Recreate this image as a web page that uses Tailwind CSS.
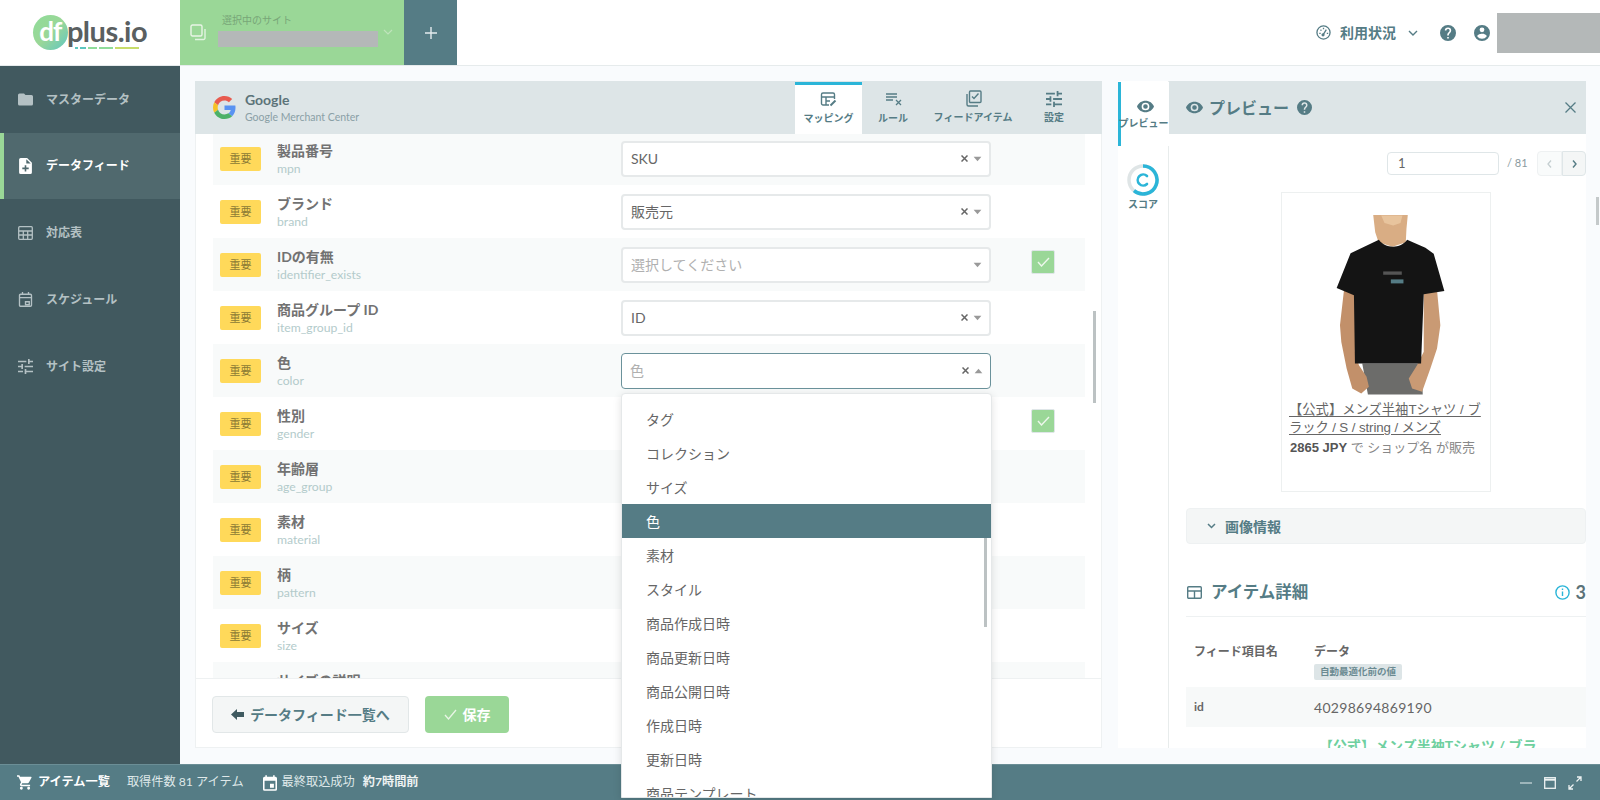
<!DOCTYPE html>
<html lang="ja">
<head>
  <meta charset="UTF-8" />
  <title>dfplus.io</title>
  <script src="https://cdn.jsdelivr.net/npm/@tailwindcss/browser@4"></script>
</head>
<body class="h-screen w-screen overflow-hidden flex flex-col bg-[#f9fbfd] text-[#666] [font-family:Lato,'Noto_Sans_CJK_JP',sans-serif]">

  <!-- header -->
  <header class="h-[66px] shrink-0 flex bg-white border-b border-[#e6ebec]">
    <div class="w-[180px] flex items-center justify-center">
      <div class="relative flex items-center">
        <div class="w-[35px] h-[35px] rounded-full bg-gradient-to-br from-[#8fdc9a] via-[#9ad797] to-[#5cc6c0] flex items-center justify-center">
          <span class="text-white font-bold text-[26px] leading-none tracking-[-1px] -mt-1">df</span>
        </div>
        <span class="-ml-[1px] text-[#5a5f61] font-bold text-[29px] leading-none tracking-[-0.5px] -mt-1">plus.io</span>
        <div class="absolute left-[42px] bottom-[1px] flex gap-[2px] h-[2px]">
          <i class="w-[3px] bg-[#5cc6c0]"></i><i class="w-[6px] bg-[#5cc6c0]"></i><i class="w-[9px] bg-[#8fdc9a]"></i><i class="w-[14px] bg-[#8fdc9a]"></i><i class="w-[24px] bg-[#c8dc6a]"></i>
        </div>
      </div>
    </div>
    <div class="w-[224px] bg-[#9ad797] flex items-center pl-[10px]">
      <svg class="w-[17px] h-[17px] shrink-0" viewBox="0 0 17 17" fill="none" stroke="#fff"><rect x="1" y="1" width="11" height="11" rx="1.5" stroke="#e9f5e6" stroke-width="1.4"/><path d="M15 5v9a1.5 1.5 0 0 1-1.5 1.5H5" stroke-width="1.4" opacity=".7"/></svg>
      <div class="ml-[11px] w-[160px] -mt-[4px]">
        <div class="text-[10px] leading-[12px] text-[#78a678] ml-[4px] mb-[5px]">選択中のサイト</div>
        <div class="h-[16px] bg-[#b4b8b8]"></div>
      </div>
      <svg class="w-[10px] h-[6px] ml-[5px] -mt-[2px]" viewBox="0 0 10 6" fill="none" stroke="#bfe3bb" stroke-width="1.2"><path d="M1 1l4 4 4-4"/></svg>
    </div>
    <div class="w-[53px] bg-[#557c85] flex items-center justify-center">
      <svg class="w-[12px] h-[12px]" viewBox="0 0 12 12" stroke="#e4ecee" stroke-width="1.4"><path d="M6 0v12M0 6h12"/></svg>
    </div>
    <div class="flex-1 flex items-center justify-end">
      <svg class="w-[15px] h-[15px] text-[#557c85]" viewBox="0 0 16 16" fill="none" stroke="currentColor" stroke-width="1.4"><circle cx="8" cy="8" r="7"/><path d="M7.5 10.500L11 5M3.500 9h1.500M11.500 9H13M8 3v1.500M4.800 5l1 1"/><circle cx="7.500" cy="10.500" r="1" fill="currentColor"/></svg>
      <span class="ml-[9px] text-[14px] font-bold text-[#557c85] leading-none">利用状況</span>
      <svg class="ml-[12px] w-[10px] h-[6px]" viewBox="0 0 10 6" fill="none" stroke="#557c85" stroke-width="1.4"><path d="M1 1l4 4 4-4"/></svg>
      <svg class="ml-[22px] w-[16px] h-[16px] text-[#557c85]" viewBox="2 2 20 20" fill="currentColor"><path d="M12 2a10 10 0 1 0 0 20 10 10 0 0 0 0-20zm1 17h-2v-2h2zm2.07-7.75-.9.92C13.45 12.9 13 13.5 13 15h-2v-.5c0-1.1.45-2.1 1.17-2.83l1.24-1.26A2 2 0 1 0 10 9H8a4 4 0 1 1 8 0c0 .88-.36 1.68-.93 2.25z"/></svg>
      <svg class="ml-[18px] w-[16px] h-[16px] text-[#557c85]" viewBox="2 2 20 20" fill="currentColor"><path d="M12 2a10 10 0 1 0 0 20 10 10 0 0 0 0-20zm0 3a3 3 0 1 1 0 6 3 3 0 0 1 0-6zm0 14.2a7.2 7.2 0 0 1-6-3.22c.03-1.99 4-3.08 6-3.08s5.97 1.09 6 3.08a7.2 7.2 0 0 1-6 3.22z"/></svg>
      <div class="ml-[7px] w-[103px] h-[40px] bg-[#b4b8b8]"></div>
    </div>
  </header>

  <div class="flex-1 flex min-h-0">
    <!-- sidebar -->
    <nav class="w-[180px] shrink-0 bg-[#41595f] text-[#b4c1c4] text-[12px] font-bold">
      <a class="h-[67px] flex items-center pl-[18px] gap-[13px]">
        <svg class="w-[15px] h-[15px]" viewBox="2 3 20 18" fill="currentColor"><path d="M10 4H4a2 2 0 0 0-2 2v12a2 2 0 0 0 2 2h16a2 2 0 0 0 2-2V8a2 2 0 0 0-2-2h-8z"/></svg>
        マスターデータ
      </a>
      <a class="h-[66px] flex items-center pl-[14px] gap-[13px] border-l-4 border-[#9ad797] bg-[#50696e] text-white">
        <svg class="w-[15px] h-[16px]" viewBox="4 2 16 20" fill="currentColor"><path d="M14 2H6a2 2 0 0 0-2 2v16a2 2 0 0 0 2 2h12a2 2 0 0 0 2-2V8zm2 14h-3v3h-2v-3H8v-2h3v-3h2v3h3zm-3-7V3.5L18.5 9z"/></svg>
        データフィード
      </a>
      <a class="h-[67px] flex items-center pl-[18px] gap-[13px]">
        <svg class="w-[15px] h-[14px]" viewBox="0 0 15 14" fill="none" stroke="currentColor" stroke-width="1.3"><rect x=".7" y=".7" width="13.6" height="12.6" rx="1"/><path d="M.7 5h13.6M.7 9h13.6M5.3 5v8.3M9.7 5v8.3"/></svg>
        対応表
      </a>
      <a class="h-[67px] flex items-center pl-[18px] gap-[13px]">
        <svg class="w-[15px] h-[15px]" viewBox="3 2 18 20" fill="none" stroke="currentColor" stroke-width="1.8"><rect x="4" y="5" width="16" height="16" rx="1.5"/><path d="M4 9.500h16M8 2v4M16 2v4M12 15h5v4h-5z"/></svg>
        スケジュール
      </a>
      <a class="h-[67px] flex items-center pl-[18px] gap-[13px]">
        <svg class="w-[15px] h-[15px]" viewBox="3 3 18 18" fill="currentColor"><path d="M3 17v2h6v-2zM3 5v2h10V5zm10 16v-2h8v-2h-8v-2h-2v6zM7 9v2H3v2h4v2h2V9zm14 4v-2H11v2zm-6-4h2V7h4V5h-4V3h-2z"/></svg>
        サイト設定
      </a>
    </nav>

    <!-- main -->
    <main class="flex-1 flex pt-[15px] pb-[16px] pl-[15px] pr-[14px] gap-[16px] min-w-0">
      <!-- mapping card -->
      <section class="relative w-[907px] shrink-0 flex flex-col bg-white border border-[#eef1f2] border-t-0">
        <div class="relative z-10 h-[53px] shrink-0 flex bg-[#dde5e7] -mx-px pr-[16px]">
          <div class="flex items-center pl-[18px] flex-1">
            <svg class="w-[23px] h-[23px] opacity-85" viewBox="0 0 48 48"><path fill="#EA4335" d="M24 9.500c3.540 0 6.710 1.220 9.210 3.600l6.850-6.850C35.900 2.380 30.470 0 24 0 14.620 0 6.510 5.380 2.560 13.220l7.980 6.190C12.430 13.720 17.740 9.500 24 9.500z"/><path fill="#4285F4" d="M46.980 24.550c0-1.570-.15-3.090-.38-4.550H24v9.020h12.940c-.58 2.960-2.260 5.480-4.780 7.180l7.730 6c4.510-4.180 7.090-10.360 7.090-17.650z"/><path fill="#FBBC05" d="M10.530 28.590c-.48-1.450-.76-2.990-.76-4.590s.27-3.140.76-4.590l-7.980-6.190C.92 16.460 0 20.120 0 24c0 3.880.92 7.540 2.560 10.780l7.970-6.190z"/><path fill="#34A853" d="M24 48c6.480 0 11.930-2.130 15.890-5.810l-7.730-6c-2.150 1.450-4.920 2.300-8.160 2.300-6.260 0-11.570-4.220-13.470-9.910l-7.980 6.190C6.510 42.620 14.620 48 24 48z"/></svg>
            <div class="ml-[9px]">
              <div class="text-[14px] leading-[18px] font-bold text-[#5c7379]">Google</div>
              <div class="text-[10.500px] leading-[16px] text-[#8aa0a6]">Google Merchant Center</div>
            </div>
          </div>
          <div class="w-[67px] mt-px bg-white border-t-[3px] border-[#2bb5d8] flex flex-col items-center pt-[6px] text-[10px] font-bold text-[#557c85]">
            <svg class="w-[17px] h-[17px]" viewBox="0 0 17 17" fill="none" stroke="currentColor" stroke-width="1.4"><path d="M9 14H3a1.500 1.500 0 0 1-1.500-1.500v-9A1.500 1.500 0 0 1 3 2h10a1.500 1.500 0 0 1 1.500 1.500V8M1.500 6h13M6 6v8M6 10h4"/><path d="M10.500 14.500l5-5" stroke-width="2"/></svg>
            <span class="mt-[3px] leading-[14px]">マッピング</span>
          </div>
          <div class="w-[62px] flex flex-col items-center pt-[10px] text-[10px] font-bold text-[#557c85]">
            <svg class="w-[17px] h-[17px]" viewBox="0 0 17 17" fill="none" stroke="currentColor" stroke-width="1.3"><path d="M1 3h11M1 6h11M1 9h7M11 9l5 5M16 9l-5 5"/></svg>
            <span class="mt-[3px] leading-[14px]">ルール</span>
          </div>
          <div class="w-[98px] flex flex-col items-center pt-[9px] text-[10px] font-bold text-[#557c85]">
            <svg class="w-[17px] h-[17px]" viewBox="0 0 17 17" fill="none" stroke="currentColor" stroke-width="1.4"><rect x="4.500" y="1" width="11.500" height="11.500" rx="1"/><path d="M7 6.500l2 2 4.500-5M2 4v10.500A1.500 1.500 0 0 0 3.500 16H13"/></svg>
            <span class="mt-[3px] leading-[14px]">フィードアイテム</span>
          </div>
          <div class="w-[64px] flex flex-col items-center pt-[10px] text-[10px] font-bold text-[#557c85]">
            <svg class="w-[16px] h-[16px]" viewBox="3 3 18 18" fill="currentColor"><path d="M3 17v2h6v-2zM3 5v2h10V5zm10 16v-2h8v-2h-8v-2h-2v6zM7 9v2H3v2h4v2h2V9zm14 4v-2H11v2zm-6-4h2V7h4V5h-4V3h-2z"/></svg>
            <span class="mt-[3px] leading-[14px]">設定</span>
          </div>
        </div>

        <div class="relative flex-1 min-h-0 overflow-hidden pl-[17px] pr-[16px]">
          <div id="rows" class="-mt-[2px]"></div>
          <div class="absolute right-[5px] top-[177px] w-[3px] h-[92px] bg-[#bcc2c3]"></div>
        </div>

        <div class="h-[69px] shrink-0 flex items-center gap-[16px] pl-[16px] pt-[2px] border-t border-[#eef1f2] bg-white">
          <button class="w-[197px] h-[37px] flex items-center justify-center gap-[6px] rounded-[4px] border border-[#e2e7e8] bg-[#f4f6f6] text-[14px] font-bold text-[#557c85]">
            <svg class="w-[13px] h-[11px]" viewBox="0 0 13 11" fill="#3f5a60"><path d="M6 0v3h7v5H6v3L0 5.500z"/></svg>
            データフィード一覧へ
          </button>
          <button class="w-[84px] h-[37px] flex items-center justify-center gap-[6px] rounded-[4px] bg-[#9ad797] text-[14px] font-bold text-white">
            <svg class="w-[13px] h-[11px]" viewBox="0 0 13 11" fill="none" stroke="#e9f5e6" stroke-width="1.3"><path d="M1 6l3.500 4L12 1"/></svg>
            保存
          </button>
        </div>

        <!-- open dropdown -->
        <div class="absolute z-50 left-[425px] top-[312px] w-[371px] h-[405px] overflow-hidden bg-white rounded-t-[4px] border border-[#e5e8e9] shadow-[0_2px_8px_rgba(0,0,0,0.12)] pt-[8px] text-[14px] text-[#666]">
          <div id="options"></div>
          <div class="absolute right-[4px] top-[144px] w-[3px] h-[89px] bg-[#bcc2c3]"></div>
        </div>
      </section>

      <!-- preview -->
      <section class="flex-1 flex min-w-0 bg-white">
        <div class="w-[51px] shrink-0 border-r border-[#e8ecec] text-[10px] font-bold text-[#557c85]">
          <div class="h-[64px] mt-px border-l-[3px] border-[#2bb5d8] bg-white flex flex-col items-center pt-[18px] -mr-px">
            <svg class="w-[17px] h-[13px]" viewBox="1 4.500 22 15" fill="currentColor"><path d="M12 4.500C7 4.500 2.700 7.600 1 12c1.700 4.400 6 7.500 11 7.500s9.300-3.100 11-7.500c-1.700-4.400-6-7.500-11-7.500zM12 17a5 5 0 1 1 0-10 5 5 0 0 1 0 10zm0-8a3 3 0 1 0 0 6 3 3 0 0 0 0-6z"/></svg>
            <span class="mt-[3px] leading-[14px] whitespace-nowrap -ml-[3px]">プレビュー</span>
          </div>
          <div class="flex flex-col items-center mt-[18px]">
            <svg class="w-[32px] h-[32px]" viewBox="0 0 32 32" fill="none"><circle cx="16" cy="16" r="14" stroke="#dfe5e6" stroke-width="3.500"/><path d="M16 2a14 14 0 1 1-9 24.700" stroke="#2bb5d8" stroke-width="3.500"/><path d="M20 12a5.500 5.500 0 1 0 0 8" stroke="#2bb5d8" stroke-width="2.600" stroke-linecap="round"/></svg>
            <span class="mt-[1px] leading-[14px]">スコア</span>
          </div>
        </div>

        <div class="relative flex-1 min-w-0 flex flex-col">
          <div class="h-[53px] shrink-0 flex items-center bg-[#dde5e7] pl-[17px] pr-[10px]">
            <svg class="w-[17px] h-[13px] text-[#557c85]" viewBox="1 4.500 22 15" fill="currentColor"><path d="M12 4.500C7 4.500 2.700 7.600 1 12c1.700 4.400 6 7.500 11 7.500s9.300-3.100 11-7.500c-1.700-4.400-6-7.500-11-7.500zM12 17a5 5 0 1 1 0-10 5 5 0 0 1 0 10zm0-8a3 3 0 1 0 0 6 3 3 0 0 0 0-6z"/></svg>
            <span class="ml-[6px] text-[16px] font-bold text-[#557c85] leading-none">プレビュー</span>
            <svg class="ml-[8px] w-[15px] h-[15px] text-[#557c85]" viewBox="2 2 20 20" fill="currentColor"><path d="M12 2a10 10 0 1 0 0 20 10 10 0 0 0 0-20zm1 17h-2v-2h2zm2.070-7.750-.9.920C13.450 12.900 13 13.500 13 15h-2v-.5c0-1.100.45-2.100 1.170-2.830l1.240-1.260A2 2 0 1 0 10 9H8a4 4 0 1 1 8 0c0 .88-.36 1.680-.93 2.250z"/></svg>
            <svg class="ml-auto w-[11px] h-[11px]" viewBox="0 0 11 11" stroke="#557c85" stroke-width="1.300"><path d="M.5.5l10 10M10.500.5l-10 10"/></svg>
          </div>

          <div class="flex-1 min-h-0 overflow-hidden pl-[17px]">
            <div class="mt-[17px] flex items-center justify-end h-[25px]">
              <div class="w-[112px] h-[23px] border border-[#dfe6e8] rounded-[4px] pl-[10px] text-[13px] leading-[21px]">1</div>
              <span class="ml-[8px] w-[30px] text-[11px] text-[#8a9a9e]">/ 81</span>
              <div class="w-[25px] h-[25px] border border-[#eef1f2] bg-[#f9fbfb] rounded-l-[4px] flex items-center justify-center">
                <svg class="w-[5px] h-[8px]" viewBox="0 0 5 8" fill="none" stroke="#c4ced0" stroke-width="1.300"><path d="M4 .5L1 4l3 3.500"/></svg>
              </div>
              <div class="w-[24px] h-[25px] border border-[#dfe6e8] bg-[#f4f6f6] rounded-r-[4px] flex items-center justify-center">
                <svg class="w-[5px] h-[8px]" viewBox="0 0 5 8" fill="none" stroke="#557c85" stroke-width="1.400"><path d="M1 .5L4 4 1 7.500"/></svg>
              </div>
            </div>

            <!-- product card -->
            <div class="mt-[16px] ml-[95px] w-[210px] h-[300px] border border-[#edf0f0] flex flex-col px-[10px]">
              <svg class="w-[113px] h-[184px] mt-[19px] ml-[42px] shrink-0" viewBox="270 60 340 552">
                <path d="M388 68h104l-4 42-2 40-40 14-42-14-10-30z" fill="#d9ad84"/>
                <path d="M412 70h64l-6 22-22 8-26-8z" fill="#e8c49d"/>
                <path d="M355 515h178l4 93H372z" fill="#6c6c6a"/>
                <path d="M300 295L288 400l4 50 16 80 17 60 27 15 23-20-7-30-23-35-12-40 2-180z" fill="#c2906a"/>
                <path d="M580 295l10 105-10 70-20 60-25 70-30-10-10-30 25-40 20-40V300z" fill="#c99a74"/>
                <path d="M405 143c20 28 65 28 85 0l55 24 25 18 32 112-62 10-8 208H333l-3-205-52-22 42-105z" fill="#141414"/>
                <rect x="418" y="238" width="56" height="10" fill="#555"/>
                <rect x="441" y="262" width="38" height="12" fill="#557c85"/>
              </svg>
              <a class="mt-[5px] -ml-[3px] -mr-[6px] text-[13.300px] leading-[18px] whitespace-nowrap text-[#666] underline underline-offset-2 [font-family:'Liberation_Sans','Noto_Sans_CJK_JP',sans-serif]">【公式】メンズ半袖Tシャツ / ブ<br><span class="tracking-[-0.1px]">ラック / S / string / メンズ</span></a>
              <p class="mt-[2px] -ml-[2px] text-[13px] leading-[17px] whitespace-nowrap text-[#888] [font-family:'Liberation_Sans','Noto_Sans_CJK_JP',sans-serif]"><b class="text-[#555]">2865 JPY</b> で ショップ名 が販売</p>
            </div>

            <div class="mt-[16px] h-[36px] flex items-center rounded-[4px] border border-[#eef1f2] bg-[#f4f6f6] pl-[20px] text-[14px] font-bold text-[#557c85]">
              <svg class="w-[9px] h-[6px]" viewBox="0 0 9 6" fill="none" stroke="#557c85" stroke-width="1.500"><path d="M1 1l3.500 3.500L8 1"/></svg>
              <span class="ml-[9px]">画像情報</span>
            </div>

            <div class="mt-[36px] h-[37px] flex items-start border-b border-[#eef1f2] text-[#557c85]">
              <svg class="w-[15px] h-[13px] mt-[6px] ml-px" viewBox="0 0 15 13" fill="none" stroke="currentColor" stroke-width="1.400"><rect x=".7" y=".7" width="13.600" height="11.600" rx="1"/><path d="M.7 5h13.600M7.500 5v7.300"/></svg>
              <span class="ml-[9px] text-[16.500px] font-bold leading-[25px]">アイテム詳細</span>
              <svg class="ml-auto w-[15px] h-[15px] mt-[5px]" viewBox="0 0 15 15" fill="none" stroke="#2bb5d8" stroke-width="1.400"><circle cx="7.500" cy="7.500" r="6.600"/><path d="M7.500 6.500v4.500M7.500 3.500v1.500"/></svg>
              <span class="ml-[6px] text-[18px] font-bold leading-[24px] text-[#5c7379]">3</span>
            </div>

            <div class="flex pt-[26px] h-[70px]">
              <div class="w-[128px] pl-[8px] text-[12px] font-bold leading-[18px]">フィード項目名</div>
              <div>
                <div class="text-[12px] font-bold leading-[18px]">データ</div>
                <div class="mt-[3px] w-[88px] h-[16px] rounded-[2px] bg-[#dde5e7] text-center text-[9.500px] font-bold leading-[16px] text-[#6b8b92]">自動最適化前の値</div>
              </div>
            </div>
            <div class="flex items-center h-[40px] bg-[#f7f9f9]">
              <div class="w-[128px] pl-[8px] text-[12px] font-bold">id</div>
              <div class="text-[14px] tracking-[0.3px]">40298694869190</div>
            </div>
            <div class="pl-[133px] pt-[9px] text-[14px] leading-[20px] font-bold text-[#6fd0a0] whitespace-nowrap">【公式】メンズ半袖Tシャツ / ブラ</div>
          </div>
          <div class="absolute right-[-13px] top-[116px] w-[3px] h-[28px] bg-[#c4c9ca]"></div>
        </div>
      </section>
    </main>
  </div>

  <!-- bottom bar -->
  <footer class="h-[36px] shrink-0 flex items-center bg-[#557c85] text-white text-[12.200px] pl-[17px] pr-[18px] border-t border-[#6b8e96]">
    <svg class="w-[16px] h-[15px]" viewBox="1 2 22 20" fill="currentColor"><path d="M7 18a2 2 0 1 0 0 4 2 2 0 0 0 0-4zM1 2v2h2l3.600 7.590-1.350 2.450A2 2 0 0 0 7 17h12v-2H7.420a.25.25 0 0 1-.25-.25l.03-.12.9-1.630h7.450c.75 0 1.410-.41 1.750-1.030l3.580-6.490A1 1 0 0 0 20 4H5.210l-.94-2zm16 16a2 2 0 1 0 0 4 2 2 0 0 0 0-4z"/></svg>
    <span class="ml-[5px] font-bold">アイテム一覧</span>
    <span class="ml-[17px] text-[#dfe8e9]">取得件数 81 アイテム</span>
    <svg class="ml-[19px] w-[14px] h-[16px]" viewBox="3 2 18 20" fill="currentColor"><path d="M19 4h-1V2h-2v2H8V2H6v2H5a2 2 0 0 0-2 2v14a2 2 0 0 0 2 2h14a2 2 0 0 0 2-2V6a2 2 0 0 0-2-2zm0 16H5V9h14zm-2-7h-5v5h5z"/></svg>
    <span class="ml-[5px] text-[#dfe8e9]">最終取込成功</span>
    <span class="ml-[8px] font-bold text-[#eef3f3]">約7時間前</span>
    <svg class="ml-auto w-[12px] h-[2px]" viewBox="0 0 12 2" fill="#9db5ba"><rect width="12" height="2"/></svg>
    <svg class="ml-[12px] w-[12px] h-[12px]" viewBox="0 0 12 12" fill="none" stroke="#eef3f3" stroke-width="1.300"><rect x=".7" y=".7" width="10.600" height="10.600"/><path d="M.7 2.700h10.600" stroke-width="2"/></svg>
    <svg class="ml-[12px] w-[14px] h-[14px]" viewBox="0 0 14 14" fill="none" stroke="#eef3f3" stroke-width="1.300"><path d="M8.500 5.500L13 1M9 1h4v4M5.500 8.500L1 13M1 9v4h4"/></svg>
  </footer>

  <script>
    // mapping rows: label, feed name, select value, and flags
    const rows = [
      { label: '製品番号', name: 'mpn', value: 'SKU' },
      { label: 'ブランド', name: 'brand', value: '販売元' },
      { label: 'IDの有無', name: 'identifier_exists', hint: '選択してください', checked: true },
      { label: '商品グループ ID', name: 'item_group_id', value: 'ID' },
      { label: '色', name: 'color', hint: '色', clear: true, open: true },
      { label: '性別', name: 'gender', checked: true },
      { label: '年齢層', name: 'age_group' },
      { label: '素材', name: 'material' },
      { label: '柄', name: 'pattern' },
      { label: 'サイズ', name: 'size' },
      { label: 'サイズの説明', name: 'size_type', noBadge: true },
    ];
    const options = ['タグ', 'コレクション', 'サイズ', '色', '素材', 'スタイル', '商品作成日時', '商品更新日時', '商品公開日時', '作成日時', '更新日時', '商品テンプレート'];

    document.getElementById('rows').innerHTML = rows.map((r, i) => {
      const shade = i % 2 === 0 ? 'bg-[#f8fafa]' : 'bg-white';
      const box = r.open ? 'border-[1.500px] border-[#6b929b]' : 'border-2 border-[#e6e9ea]';
      const text = r.value ? 'text-[#666]' : 'text-[#b0b0b0]';
      const caret = r.open ? '<path d="M0 6l4.500-5L9 6z"/>' : '<path d="M0 1l4.500 5L9 1z"/>';
      const clear = r.value || r.clear ? '<svg class="w-[7px] h-[7px] mr-[5px]" viewBox="0 0 7 7" stroke="#666" stroke-width="1.500"><path d="M.5.5l6 6M6.500.5l-6 6"/></svg>' : '';
      const badge = r.noBadge ? '' : '<div class="w-[41px] h-[24px] rounded-[2px] bg-[#ffd95a] text-center text-[11px] leading-[24px] text-[#8b7a35]">重要</div>';
      const check = r.checked
        ? '<div class="ml-[40px] -mt-[5px] w-[24px] h-[24px] rounded-[2px] bg-[#9ad797] border border-[#dfe6e8] flex items-center justify-center"><svg class="w-[13px] h-[10px]" viewBox="0 0 13 10" fill="none" stroke="#eef7ec" stroke-width="1.400"><path d="M1 5l3.500 4L12 1"/></svg></div>'
        : '';
      return `<div class="h-[53px] flex items-center ${shade}">
        <div class="w-[64px] pl-[7px] shrink-0">${badge}</div>
        <div class="w-[344px] shrink-0 pt-[3px]">
          <div class="text-[14px] font-bold leading-[16px] mb-[2px] text-[#727272]">${r.label}</div>
          <div class="text-[12.200px] leading-[16px] text-[#b3cbcb]">${r.name}</div>
        </div>
        <div class="w-[370px] h-[36px] shrink-0 flex items-center rounded-[4px] bg-white ${box} pl-[8px] pr-[7px] text-[14px] ${text}">
          <span class="flex-1">${r.value || r.hint || ''}</span>
          ${clear}
          <svg class="w-[9px] h-[6px]" viewBox="0 0 9 7" fill="#999">${caret}</svg>
        </div>
        ${check}
      </div>`;
    }).join('');

    document.getElementById('options').innerHTML = options.map(o => {
      const cls = o === '色' ? 'bg-[#557c85] text-white' : '';
      return `<div class="h-[34px] flex items-center pl-[24px] ${cls}">${o}</div>`;
    }).join('');
  </script>
</body>
</html>
